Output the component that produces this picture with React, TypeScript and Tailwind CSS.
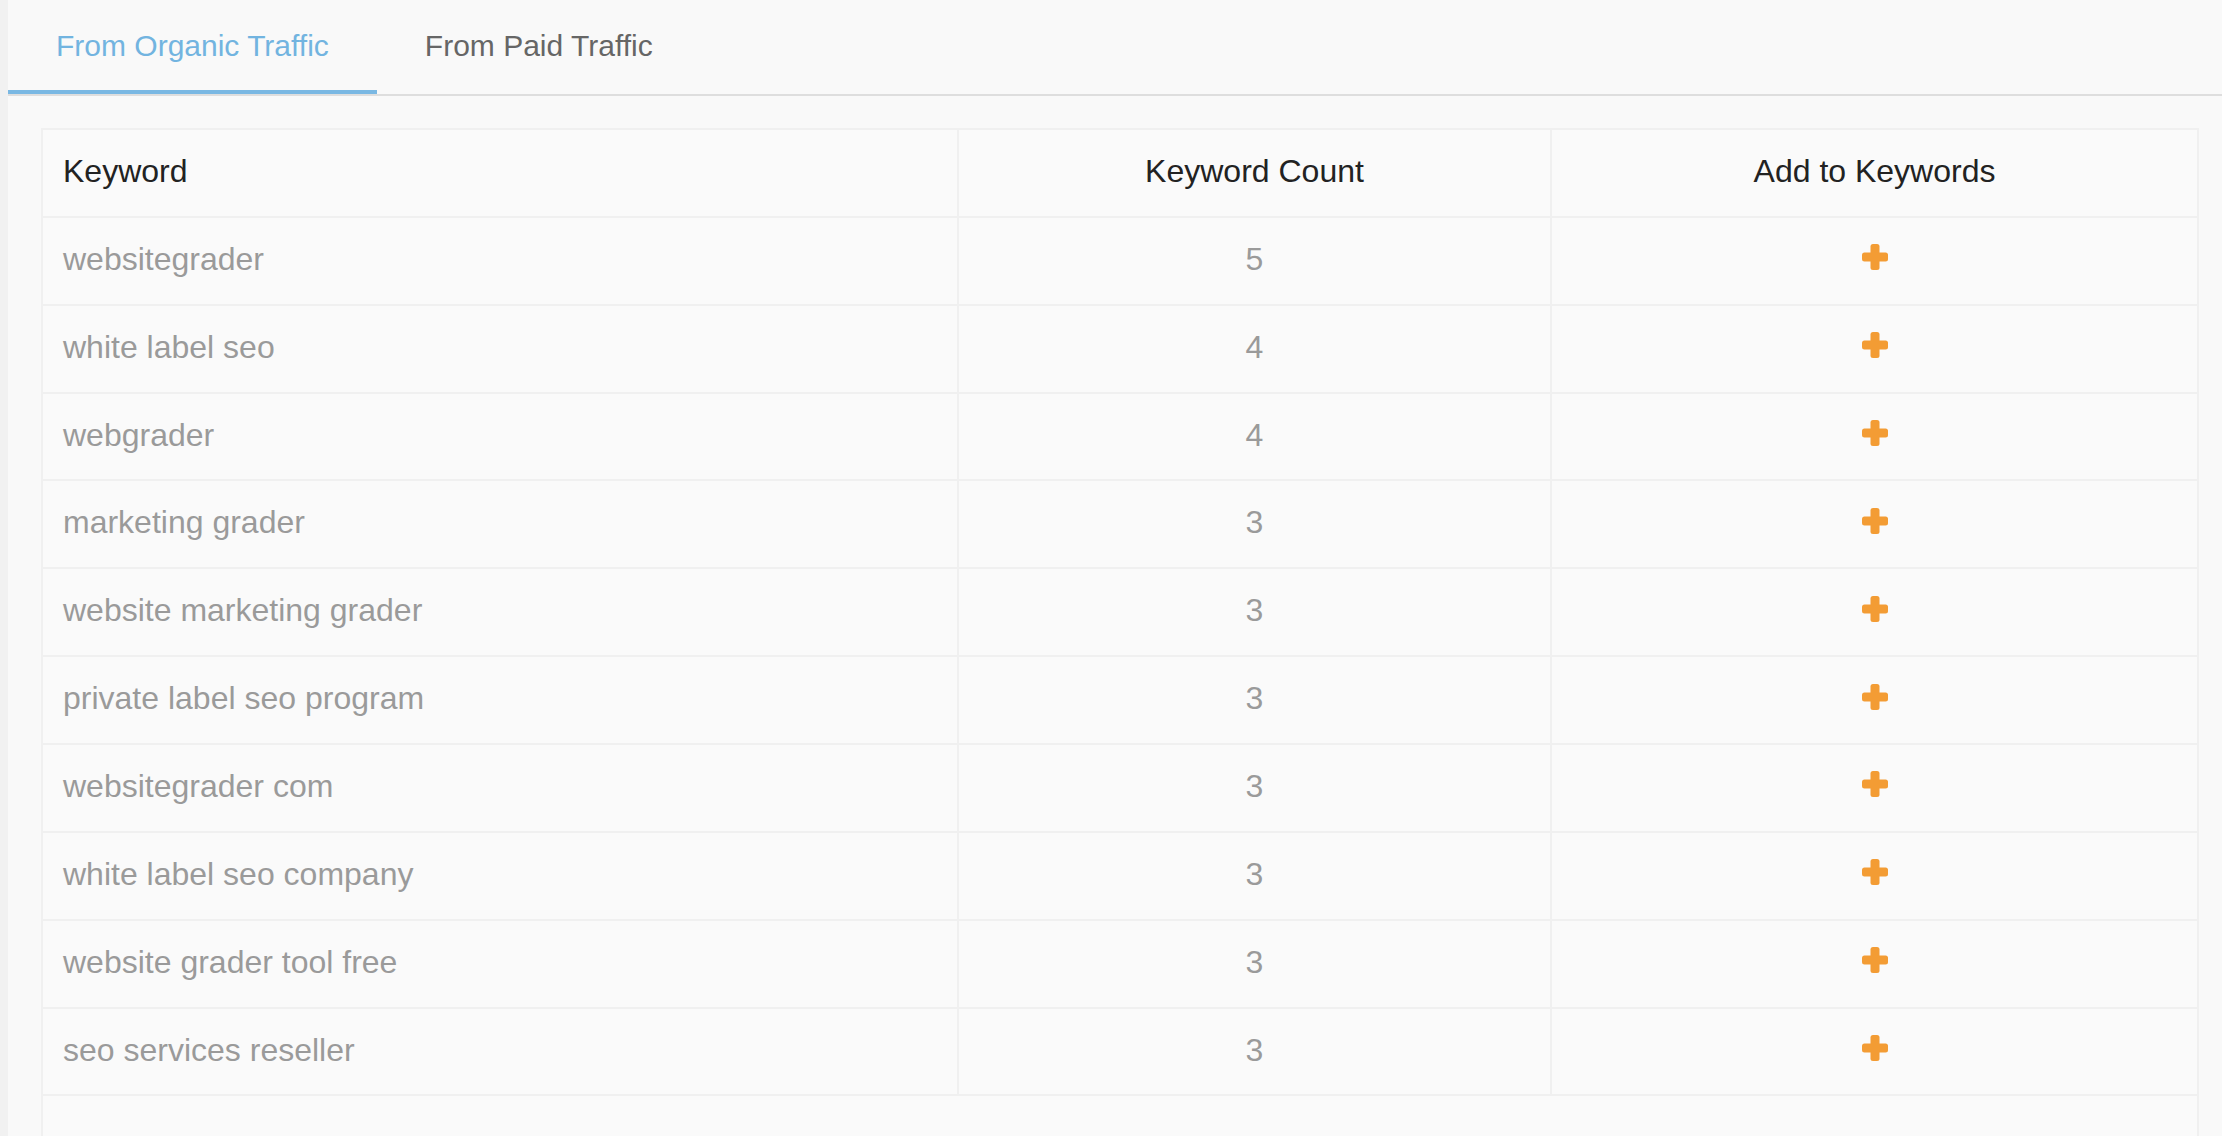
import React from "react";

const rows: { keyword: string; count: number }[] = [
  { keyword: "websitegrader", count: 5 },
  { keyword: "white label seo", count: 4 },
  { keyword: "webgrader", count: 4 },
  { keyword: "marketing grader", count: 3 },
  { keyword: "website marketing grader", count: 3 },
  { keyword: "private label seo program", count: 3 },
  { keyword: "websitegrader com", count: 3 },
  { keyword: "white label seo company", count: 3 },
  { keyword: "website grader tool free", count: 3 },
  { keyword: "seo services reseller", count: 3 },
];

const PlusIcon = () => (
  <svg width="28" height="28" viewBox="0 0 28 28" className="inline-block">
    <rect x="9.5" y="1" width="9" height="26" rx="2.5" fill="#f39c34" />
    <rect x="1" y="9.5" width="26" height="9" rx="2.5" fill="#f39c34" />
  </svg>
);

export default function App() {
  return (
    <div
      className="flex min-h-screen bg-[#f9f9f9]"
      style={{ fontFamily: '"Liberation Sans", Arial, sans-serif' }}
    >
      <div className="w-2 shrink-0 bg-[#f1f1f1]" />
      <div className="flex-1 min-w-0">
        {/* tabs */}
        <div className="flex border-b-2 border-[#dedede]">
          <button className="h-[94px] px-[48px] border-b-4 border-[#7ab8e3] text-[30px] text-[#72b4e0] pt-[1px]">
            From Organic Traffic
          </button>
          <button className="h-[94px] px-[48px] border-b-4 border-transparent text-[30px] text-[#666666] pt-[1px]">
            From Paid Traffic
          </button>
        </div>

        <div className="ml-[33px] mr-[23px] mt-[32px]">
          <table className="w-full table-fixed border-collapse bg-[#fafafa] text-[32px]">
            <colgroup>
              <col className="w-[916px]" />
              <col className="w-[593px]" />
              <col />
            </colgroup>
            <thead>
              <tr>
                <th className="h-[87.86px] border-2 border-[#f0f0f0] px-5 pb-1 text-left font-normal text-[#222222]">
                  Keyword
                </th>
                <th className="h-[87.86px] border-2 border-[#f0f0f0] px-5 pb-1 text-center font-normal text-[#222222]">
                  Keyword Count
                </th>
                <th className="h-[87.86px] border-2 border-[#f0f0f0] px-5 pb-1 text-center font-normal text-[#222222]">
                  Add to Keywords
                </th>
              </tr>
            </thead>
            <tbody>
              {rows.map((r) => (
                <tr key={r.keyword}>
                  <td className="h-[87.86px] border-2 border-[#f0f0f0] px-5 pb-1 text-[#9a9a9a]">
                    {r.keyword}
                  </td>
                  <td className="h-[87.86px] border-2 border-[#f0f0f0] px-5 pb-1 text-center text-[#9a9a9a]">
                    {r.count}
                  </td>
                  <td className="h-[87.86px] border-2 border-[#f0f0f0] px-5 pb-3 text-center">
                    <PlusIcon />
                  </td>
                </tr>
              ))}
              <tr>
                <td colSpan={3} className="h-[88px] border-2 border-[#f0f0f0]" />
              </tr>
            </tbody>
          </table>
        </div>
      </div>
    </div>
  );
}
